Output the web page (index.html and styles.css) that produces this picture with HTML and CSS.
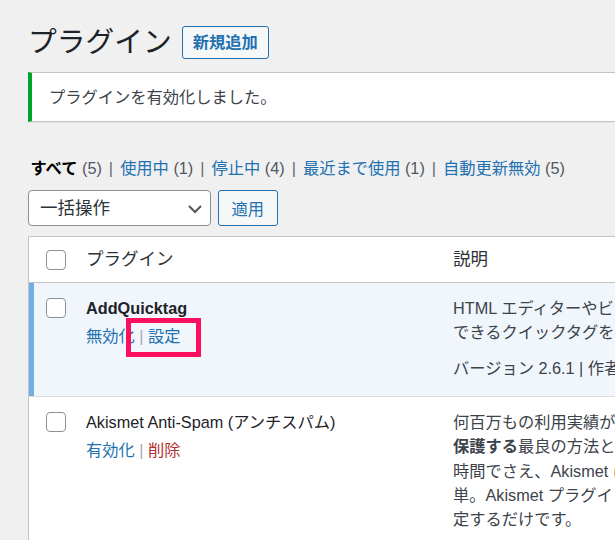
FILE: index.html
```html
<!DOCTYPE html>
<html lang="ja">
<head>
  <meta charset="UTF-8">
  <meta name="viewport" content="width=device-width, initial-scale=1.0">
  <title>プラグイン</title>
  <link rel="stylesheet" href="styles.css">
</head>
<body>

  <div class="wrap">
    <div class="page-head">
      <h1>プラグイン</h1>
      <a href="#" class="title-action">新規追加</a>
    </div>

    <div class="notice">
      <p>プラグインを有効化しました。</p>
    </div>

    <ul class="subsubsub">
      <li><a href="#" class="current">すべて <span class="count">(5)</span></a> |</li>
      <li><a href="#">使用中 <span class="count">(1)</span></a> |</li>
      <li><a href="#">停止中 <span class="count">(4)</span></a> |</li>
      <li><a href="#">最近まで使用 <span class="count">(1)</span></a> |</li>
      <li><a href="#">自動更新無効 <span class="count">(5)</span></a></li>
    </ul>

    <div class="tablenav">
      <div class="select-wrap">
        <select class="bulk-select">
          <option>一括操作</option>
          <option>有効化</option>
          <option>無効化</option>
          <option>削除</option>
        </select>
        <svg class="chevron" width="16" height="10" viewBox="0 0 16 10">
          <path d="M2 2 L8 8 L14 2" fill="none" stroke="#50575e" stroke-width="2"/>
        </svg>
      </div>
      <button type="button" class="button">適用</button>
    </div>

    <table class="plugins">
      <colgroup>
        <col class="col-check">
        <col class="col-name">
        <col>
      </colgroup>
      <thead>
        <tr>
          <td class="check"><input type="checkbox"></td>
          <th>プラグイン</th>
          <th>説明</th>
        </tr>
      </thead>
      <tbody>
        <tr class="active">
          <td class="check"><input type="checkbox"></td>
          <td class="plugin-title">
            <strong>AddQuicktag</strong>
            <div class="row-actions">
              <a href="#">無効化</a> | <a href="#">設定</a>
              <span class="highlight"></span>
            </div>
          </td>
          <td class="desc">
            <p>HTML エディターやビジュアルエディターに簡単に追加・管理<br>できるクイックタグを作成します。</p>
            <p class="version">バージョン 2.6.1 | 作者: <a href="#">Frank Bültge</a> | <a href="#">詳細を表示</a></p>
          </td>
        </tr>
        <tr class="inactive">
          <td class="check"><input type="checkbox"></td>
          <td class="plugin-title">
            <strong>Akismet Anti-Spam (アンチスパム)</strong>
            <div class="row-actions">
              <a href="#">有効化</a> | <a href="#" class="delete">削除</a>
            </div>
          </td>
          <td class="desc">
            <p>何百万もの利用実績がある Akismet は<strong>あなたのブログをスパムから<br>保護する</strong>最良の方法といえるでしょう。あなたが眠っている<br>時間でさえ、Akismet はサイトを守り続けます。利用開始はとても簡<br>単。Akismet プラグインを有効化し、設定ページで API キーを設<br>定するだけです。</p>
            <p class="version">バージョン 5.0.1 | 作者: <a href="#">Automattic</a> | <a href="#">詳細を表示</a></p>
          </td>
        </tr>
      </tbody>
    </table>
  </div>

</body>
</html>
```

FILE: styles.css
```css
html, body {
  overflow: hidden;
}
body {
  margin: 0;
  background-color: #f0f0f1;
  color: #3c434a;
  font-family: "Liberation Sans", "Noto Sans CJK JP", sans-serif;
  font-size: 16.25px;
}
a {
  color: #2271b1;
  text-decoration: none;
}
.wrap {
  width: 1100px;
  padding: 24px 0 0 28px;
}
.page-head {
  display: flex;
  align-items: center;
  gap: 10px;
  height: 37px;
}
h1 {
  margin: 0;
  font-size: 28.75px;
  font-weight: 400;
  line-height: 37px;
  color: #1d2327;
}
.title-action {
  box-sizing: border-box;
  height: 33px;
  padding: 0 10px;
  line-height: 31px;
  border: 1px solid #2271b1;
  border-radius: 3px;
  background-color: #f6f7f7;
  font-weight: 700;
}
.notice {
  margin-top: 11px;
  padding: 0 17px;
  background-color: #fff;
  border: 1px solid #c3c4c7;
  border-left: 4px solid #00a32a;
  box-shadow: 0 1px 1px rgba(0, 0, 0, 0.04);
}
.notice p {
  margin: 0;
  padding: 12px 0;
  line-height: 24px;
}
.subsubsub {
  margin: 30px 0 0;
  padding: 0;
  list-style: none;
  line-height: 32.5px;
  color: #646970;
}
.subsubsub li {
  display: inline;
}
.subsubsub a {
  padding: 0 2.5px;
}
.subsubsub a.current {
  color: #000;
  font-weight: 700;
}
.subsubsub .count {
  color: #50575e;
  font-weight: 400;
}
.tablenav {
  display: flex;
  gap: 7px;
  padding-top: 5.5px;
  margin-bottom: 10px;
}
.select-wrap {
  position: relative;
}
.bulk-select {
  appearance: none;
  box-sizing: border-box;
  width: 183px;
  height: 36px;
  padding: 0 30px 0 11px;
  border: 1px solid #8c8f94;
  border-radius: 4px;
  background-color: #fff;
  color: #2c3338;
  font-family: inherit;
  font-size: 17.5px;
}
.chevron {
  position: absolute;
  top: 14px;
  right: 8px;
  pointer-events: none;
}
.button {
  box-sizing: border-box;
  height: 36px;
  padding: 0 12.5px;
  border: 1px solid #2271b1;
  border-radius: 3px;
  background-color: #f6f7f7;
  color: #2271b1;
  font-family: inherit;
  font-size: 16.25px;
}
.plugins {
  width: 1072px;
  table-layout: fixed;
  border-collapse: separate;
  border-spacing: 0;
  border: 1px solid #c3c4c7;
  background-color: #fff;
  box-shadow: 0 1px 1px rgba(0, 0, 0, 0.04);
}
.col-check {
  width: 47px;
}
.col-name {
  width: 367px;
}
.plugins input[type="checkbox"] {
  appearance: none;
  display: block;
  width: 20px;
  height: 20px;
  margin: 0;
  border: 1px solid #8c8f94;
  border-radius: 4px;
  background-color: #fff;
}
.plugins thead th,
.plugins thead td {
  padding: 10.25px 10px;
  line-height: 24.5px;
  vertical-align: middle;
  text-align: left;
  font-size: 17.5px;
  font-weight: 400;
  color: #2c3338;
  border-bottom: 1px solid #c3c4c7;
}
.plugins .check {
  padding-left: 17px;
  padding-right: 10px;
}
.plugins tbody td {
  padding: 13px 10px 15px;
  line-height: 24.4px;
  vertical-align: top;
}
.plugins tbody td.check {
  padding-top: 15px;
  padding-left: 17px;
}
.plugins tr.active td {
  background-color: #f0f6fc;
  border-bottom: 1px solid #dcdcde;
}
.plugins tr.active td.check {
  box-shadow: inset 5px 0 0 #72aee6;
}
.plugin-title strong {
  display: block;
  color: #1d2327;
}
.inactive .plugin-title strong {
  font-weight: 400;
}
.row-actions {
  position: relative;
  margin-top: 4px;
  color: #a7aaad;
}
.row-actions .delete {
  color: #b32d2e;
}
.highlight {
  position: absolute;
  left: 40px;
  top: -6px;
  width: 75px;
  height: 39px;
  box-sizing: border-box;
  border: 5px solid #fb0f5e;
}
.desc p {
  margin: 0;
  white-space: nowrap;
}
.desc strong {
  color: #3c434a;
}
.desc .version {
  margin-top: 11.5px;
}
```
